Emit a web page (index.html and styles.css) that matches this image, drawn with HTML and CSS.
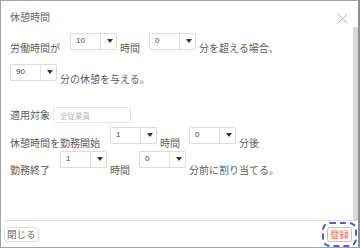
FILE: index.html
```html
<!DOCTYPE html>
<html lang="ja">
<head>
    <meta charset="UTF-8">
    <meta name="viewport" content="width=device-width, initial-scale=1.0">
    <title>休憩時間</title>
    <link rel="stylesheet" href="styles.css">
</head>
<body>
    <div class="dialog">
        <!-- Header -->
        <div class="dialog-head">
            <span class="dialog-title">休憩時間</span>
            <button class="close-btn" aria-label="閉じる">
                <svg width="11" height="11" viewBox="0 0 11 11">
                    <path d="M0.5 0.5 L10.5 10.5 M10.5 0.5 L0.5 10.5" stroke="#b4b4b4" stroke-width="1" fill="none"/>
                </svg>
            </button>
        </div>

        <!-- Body -->
        <div class="dialog-body">
            <div class="body-content">
                <div class="row row-1">
                    <span class="label">労働時間が</span>
                    <div class="select"><span class="select-value">10</span><span class="select-arrow"></span></div>
                    <span class="label">時間</span>
                    <div class="select"><span class="select-value">0</span><span class="select-arrow"></span></div>
                    <span class="label">分を超える場合、</span>
                </div>
                <div class="row row-2">
                    <div class="select"><span class="select-value">90</span><span class="select-arrow"></span></div>
                    <span class="label">分の休憩を与える。</span>
                </div>
                <div class="row row-3">
                    <span class="label">適用対象</span>
                    <input class="text-input" type="text" placeholder="全従業員">
                </div>
                <div class="row row-4">
                    <span class="label">休憩時間を勤務開始</span>
                    <div class="select"><span class="select-value">1</span><span class="select-arrow"></span></div>
                    <span class="label">時間</span>
                    <div class="select"><span class="select-value">0</span><span class="select-arrow"></span></div>
                    <span class="label">分後</span>
                </div>
                <div class="row row-5">
                    <span class="label">勤務終了</span>
                    <div class="select"><span class="select-value">1</span><span class="select-arrow"></span></div>
                    <span class="label">時間</span>
                    <div class="select"><span class="select-value">0</span><span class="select-arrow"></span></div>
                    <span class="label">分前に割り当てる。</span>
                </div>
            </div>
            <div class="scrollbar"></div>
        </div>

        <!-- Footer -->
        <div class="dialog-foot">
            <button class="btn btn-close">閉じる</button>
            <button class="btn btn-save">登録</button>
        </div>
    </div>
</body>
</html>
```

FILE: styles.css
```css
* {
    margin: 0;
    padding: 0;
    box-sizing: border-box;
    font-family: 'Noto Sans CJK JP', 'Liberation Sans', sans-serif;
}

body {
    width: 360px;
    height: 248px;
    background: #ffffff;
    overflow: hidden;
}

.dialog {
    width: 360px;
    height: 248px;
    display: flex;
    flex-direction: column;
    background: #ffffff;
    border-top: 1px solid #a3a3a3;
    border-left: 1px solid #a3a3a3;
    border-right: 2px solid #8e8e8e;
    border-bottom: 1px solid #a3a3a3;
}

/* header */
.dialog-head {
    height: 26px;
    display: flex;
    justify-content: space-between;
    align-items: flex-start;
    padding-left: 9px;
}

.dialog-title {
    margin-top: 9px;
    font-size: 10px;
    line-height: 14px;
    color: #666666;
}

.close-btn {
    margin-top: 12px;
    margin-right: 10px;
    width: 11px;
    height: 11px;
    border: none;
    background: none;
    display: flex;
}

/* body */
.dialog-body {
    height: 193px;
    display: flex;
}

.body-content {
    flex: 1;
    padding-left: 9px;
}

.scrollbar {
    width: 5px;
    height: 193px;
    background: #d6d8db;
}

.row {
    display: flex;
    align-items: flex-start;
}

.row-1 { margin-top: 6px; }
.row-2 { margin-top: 9px; }
.row-3 { margin-top: 21px; align-items: center; }
.row-4 { margin-top: 4px; }
.row-5 { margin-top: 1px; }

.label {
    font-size: 10px;
    line-height: 14px;
    color: #5c5c5c;
    white-space: nowrap;
}

.label:first-child {
    margin-right: 1px;
}

.row-1 .label,
.row-2 .label { margin-top: 8px; }
.row-4 .label { margin-top: 9px; }
.row-5 .label { margin-top: 12px; }

/* custom select */
.select {
    position: relative;
    width: 47px;
    height: 17px;
    margin: 0 3px 0 9px;
    border: 1px solid #dcdcdc;
    border-radius: 2px;
    background: #ffffff;
    flex-shrink: 0;
}

.select:first-child {
    margin-left: 0;
}

.select::after {
    content: "";
    position: absolute;
    left: 29px;
    top: 0;
    bottom: 0;
    border-left: 1px solid #e2e2e2;
}

.select-value {
    display: block;
    padding: 2px 0 0 5px;
    font-family: 'Liberation Sans', sans-serif;
    font-size: 8px;
    line-height: 10px;
    color: #444444;
}

.select-arrow {
    position: absolute;
    left: 36px;
    top: 5px;
    border-left: 3px solid transparent;
    border-right: 3px solid transparent;
    border-top: 4px solid #333333;
}

.text-input {
    width: 78px;
    height: 16px;
    margin-left: 2px;
    padding-left: 6px;
    border: 1px solid #e4e4e4;
    border-radius: 2px;
    font-size: 7.5px;
    color: #555555;
    outline: none;
}

.text-input::placeholder {
    color: #b8b8b8;
}

/* footer */
.dialog-foot {
    flex: 1;
    display: flex;
    justify-content: space-between;
    align-items: flex-start;
    margin-left: 3px;
    padding: 6px 6px 0 0;
    border-top: 1px solid #d9dce0;
}

.btn {
    height: 15px;
    padding: 0 2px;
    font-size: 9.5px;
    line-height: 13px;
    background: #ffffff;
    border-radius: 3px;
    cursor: pointer;
}

.btn-close {
    border: 1px solid #dddddd;
    color: #666666;
}

.btn-save {
    border: 1px solid #f6b47d;
    color: #f0674b;
    outline: 2px dashed #3a6cc6;
    outline-offset: 3px;
}
```
